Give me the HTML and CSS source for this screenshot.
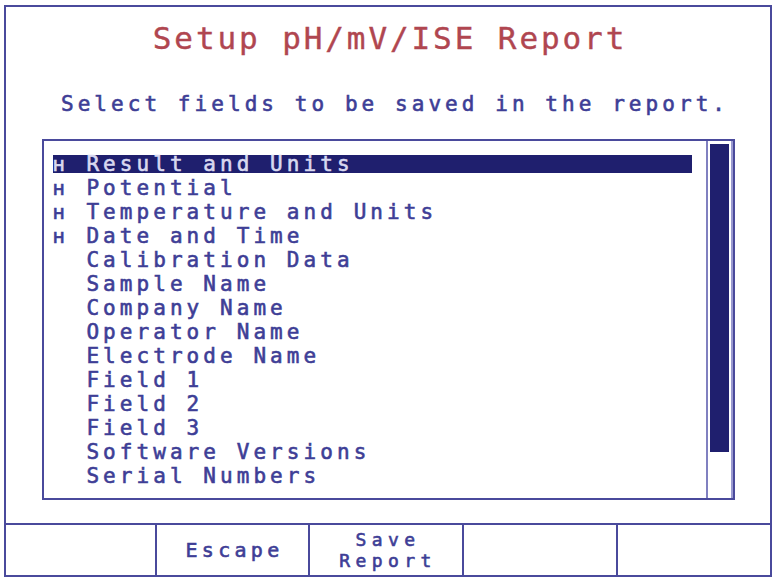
FILE: index.html
```html
<!DOCTYPE html>
<html>
<head>
<meta charset="utf-8">
<link rel="stylesheet" href="styles.css">
</head>
<body>
<div class="frame">
  <div class="title">Setup pH/mV/ISE Report</div>
  <div class="subtitle">Select fields to be saved in the report.</div>
  <div class="listbox">
    <div class="list">
      <div class="row sel"><span class="mark">ʜ</span>Result and Units</div>
      <div class="row"><span class="mark">ʜ</span>Potential</div>
      <div class="row"><span class="mark">ʜ</span>Temperature and Units</div>
      <div class="row"><span class="mark">ʜ</span>Date and Time</div>
      <div class="row"><span class="mark"></span>Calibration Data</div>
      <div class="row"><span class="mark"></span>Sample Name</div>
      <div class="row"><span class="mark"></span>Company Name</div>
      <div class="row"><span class="mark"></span>Operator Name</div>
      <div class="row"><span class="mark"></span>Electrode Name</div>
      <div class="row"><span class="mark"></span>Field 1</div>
      <div class="row"><span class="mark"></span>Field 2</div>
      <div class="row"><span class="mark"></span>Field 3</div>
      <div class="row"><span class="mark"></span>Software Versions</div>
      <div class="row"><span class="mark"></span>Serial Numbers</div>
    </div>
    <div class="scroll"><div class="thumb"></div></div>
  </div>
  <div class="buttons">
    <div class="btn"></div>
    <div class="btn">Escape</div>
    <div class="btn two"><span>Save</span><span>Report</span></div>
    <div class="btn"></div>
    <div class="btn"></div>
  </div>
</div>
</body>
</html>
```
FILE: styles.css
```css
html, body {
  margin: 0;
  padding: 0;
  background: #ffffff;
}
body {
  font-family: "DejaVu Sans Mono", "Liberation Mono", monospace;
  color: #3e3e96;
}
.frame {
  box-sizing: border-box;
  margin: 5px 0 0 4px;
  width: 768px;
  height: 572px;
  border: 2px solid #4a4a9c;
  display: flex;
  flex-direction: column;
}
.title {
  margin-top: 13px;
  height: 36px;
  line-height: 36px;
  font-size: 31px;
  letter-spacing: 2.9px;
  color: #b04650;
  text-align: center;
  padding-left: 4px;
  -webkit-text-stroke: 0.4px #b04650;
}
.subtitle {
  margin-top: 36px;
  height: 24px;
  line-height: 24px;
  font-size: 21px;
  letter-spacing: 4.06px;
  text-align: center;
  padding-left: 14px;
  -webkit-text-stroke: 0.6px #3e3e96;
}
.listbox {
  box-sizing: border-box;
  margin: 23px 35px 0 36px;
  height: 361px;
  border: 2px solid #4a4a9c;
  display: flex;
}
.list {
  flex: 1;
  padding: 11px 0 0 9px;
}
.row {
  width: 639px;
  height: 24px;
  line-height: 24px;
  font-size: 21px;
  letter-spacing: 4.06px;
  white-space: pre;
  -webkit-text-stroke: 0.6px #3e3e96;
}
.row.sel {
  background: linear-gradient(transparent 3px, #1f1f6e 3px, #1f1f6e 21px, transparent 21px);
  color: #d8d8f0;
  -webkit-text-stroke: 0.6px #d8d8f0;
}
.mark {
  display: inline-block;
  width: 33.4px;
  font-size: 19px;
}
.scroll {
  box-sizing: border-box;
  width: 27px;
  border-left: 2px solid #8080c0;
  border-right: 2px solid #9a9ad0;
  padding: 3px 0 0 2px;
}
.thumb {
  width: 19px;
  height: 308px;
  background: #1f1f6e;
}
.buttons {
  margin-top: auto;
  height: 50px;
  border-top: 2px solid #4a4a9c;
  display: grid;
  grid-template-columns: 151px 153px 154px 154px 1fr;
}
.btn {
  border-right: 2px solid #4a4a9c;
  display: flex;
  flex-direction: column;
  align-items: center;
  justify-content: center;
  text-align: center;
  font-size: 20px;
  letter-spacing: 4.3px;
  line-height: 24px;
  padding-left: 4px;
  -webkit-text-stroke: 0.6px #3e3e96;
}
.btn.two {
  font-size: 18px;
  letter-spacing: 5.4px;
  line-height: 21px;
}
.btn:last-child {
  border-right: none;
}
```
